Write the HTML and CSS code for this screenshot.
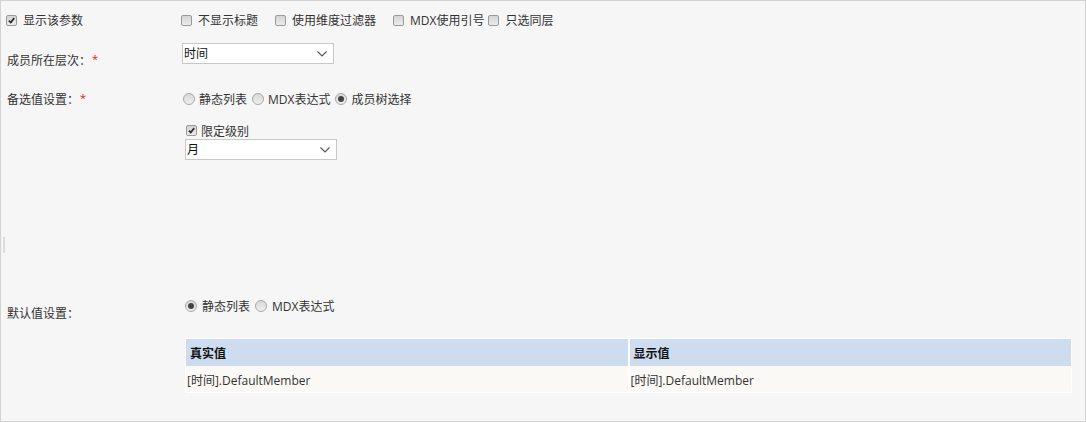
FILE: index.html
```html
<!DOCTYPE html>
<html lang="zh">
<head>
<meta charset="utf-8">
<title>参数设置</title>
<link rel="stylesheet" href="styles.css">
</head>
<body>
<div class="panel">
  <div class="row r1">
    <div class="label">
      <span class="cb checked"><svg viewBox="0 0 11 11"><path d="M2.3 5.6 L4.6 8 L8.8 2.6"/></svg></span>
      <span class="txt">显示该参数</span>
    </div>
    <div class="value opts">
      <span class="opt"><span class="cb"></span><span class="txt">不显示标题</span></span>
      <span class="opt"><span class="cb"></span><span class="txt">使用维度过滤器</span></span>
      <span class="opt tight"><span class="cb"></span><span class="txt">MDX使用引号</span></span>
      <span class="opt"><span class="cb"></span><span class="txt">只选同层</span></span>
    </div>
  </div>

  <div class="row r2">
    <div class="label">成员所在层次：<span class="req">*</span></div>
    <div class="value">
      <div class="select"><span>时间</span><svg class="chev" viewBox="0 0 10 6"><path d="M0.5 0.5 L5 5 L9.5 0.5"/></svg></div>
    </div>
  </div>

  <div class="row r3">
    <div class="label">备选值设置：<span class="req">*</span></div>
    <div class="value">
      <div class="radios first">
        <span class="ropt"><span class="rb"></span><span class="txt">静态列表</span></span>
        <span class="ropt"><span class="rb"></span><span class="txt">MDX表达式</span></span>
        <span class="ropt"><span class="rb on"></span><span class="txt">成员树选择</span></span>
      </div>
      <div class="sub">
        <div class="subcb">
          <span class="cb checked"><svg viewBox="0 0 11 11"><path d="M2.3 5.6 L4.6 8 L8.8 2.6"/></svg></span>
          <span class="txt">限定级别</span>
        </div>
        <div class="select"><span>月</span><svg class="chev" viewBox="0 0 10 6"><path d="M0.5 0.5 L5 5 L9.5 0.5"/></svg></div>
      </div>
    </div>
  </div>

  <div class="handle"></div>

  <div class="row r4">
    <div class="label">默认值设置：</div>
    <div class="value">
      <div class="radios indent">
        <span class="ropt"><span class="rb on"></span><span class="txt">静态列表</span></span>
        <span class="ropt"><span class="rb"></span><span class="txt">MDX表达式</span></span>
      </div>
    </div>
  </div>

  <table class="grid">
    <thead>
      <tr><th>真实值</th><th>显示值</th></tr>
    </thead>
    <tbody>
      <tr><td>[时间].DefaultMember</td><td>[时间].DefaultMember</td></tr>
    </tbody>
  </table>
</div>
</body>
</html>
```

FILE: styles.css
```css
* { box-sizing: border-box; }

body {
  margin: 0;
  font-family: "Open Sans", "Noto Sans CJK SC", sans-serif;
  font-size: 12px;
  color: #333;
}

.panel {
  width: 1086px;
  height: 422px;
  border: 1px solid #d3d3d3;
  background: #f6f6f6;
  padding: 8px 0 0 6px;
}

.row {
  display: flex;
  align-items: flex-start;
}

.label {
  width: 175px;
  flex: none;
  line-height: 17px;
  white-space: nowrap;
}

.value { flex: 1; }

.req {
  color: #e02020;
  font-size: 11px;
  margin-left: 1px;
  position: relative;
  top: -2px;
}

/* checkbox */
.cb {
  display: inline-block;
  width: 11px;
  height: 11px;
  flex: none;
  border: 1px solid #9a9a9a;
  border-radius: 2px;
  background: linear-gradient(#d4d4d4, #ececec);
}
.cb svg {
  display: block;
  width: 9px;
  height: 9px;
}
.cb svg path {
  fill: none;
  stroke: #2a2a2a;
  stroke-width: 2;
}

/* radio */
.rb {
  display: inline-block;
  width: 12px;
  height: 12px;
  flex: none;
  border: 1px solid #a8a8a8;
  border-radius: 50%;
  background: linear-gradient(#d8d8d8, #efefef);
  position: relative;
}
.rb.on::after {
  content: "";
  position: absolute;
  left: 2px;
  top: 2px;
  width: 6px;
  height: 6px;
  border-radius: 50%;
  background: #444;
}

/* row 1 */
.r1 { height: 22px; align-items: center; }
.r1 .label {
  display: flex;
  align-items: center;
  margin-left: -1px;
}
.r1 .label .cb { margin-right: 6px; }
.opts {
  display: flex;
  align-items: center;
}
.opt {
  display: flex;
  align-items: center;
  margin-right: 17px;
}
.opt .cb { margin-right: 6px; }
.opt.tight { margin-right: 4px; }

/* row 2 */
.r2 { margin-top: 12px; }
.r2 .label { padding-top: 10px; line-height: 16px; }

.select {
  width: 152px;
  height: 21px;
  border: 1px solid #c8c8c8;
  background: #fff;
  display: flex;
  align-items: center;
  justify-content: space-between;
  padding: 0 6px 0 1px;
  color: #111;
  line-height: 19px;
}
.chev {
  width: 10px;
  height: 6px;
  margin-top: 1px;
}
.chev path {
  fill: none;
  stroke: #555;
  stroke-width: 1.1;
}

/* row 3 */
.r3 { margin-top: 21px; }
.r3 .label { padding-top: 1px; }

.radios {
  display: flex;
  align-items: center;
  height: 17px;
}
.radios.first { margin-left: 1px; }
.radios.indent { margin-left: 3px; }
.ropt {
  display: flex;
  align-items: center;
  margin-right: 5px;
}
.ropt .rb { margin-right: 4px; }
.radios.indent .ropt .rb { margin-right: 5px; }

.sub {
  margin-left: 3px;
  margin-top: 15px;
}
.subcb {
  display: flex;
  align-items: center;
  height: 17px;
}
.subcb .cb { margin-left: 1px; margin-right: 4px; }

/* handle */
.handle {
  width: 2px;
  height: 16px;
  margin: 77px 0 0 -4px;
  background: #dcdcdc;
}

/* row 4 */
.r4 { margin-top: 44px; }
.r4 .label { padding-top: 8px; }

/* table */
.grid {
  margin: 16px 0 0 178px;
  width: 887px;
  border-collapse: collapse;
  border: 1px solid #fff;
  table-layout: fixed;
}
.grid th, .grid td {
  height: 27px;
  text-align: left;
  white-space: nowrap;
}
.grid th {
  background: #cedcef;
  color: #111;
  font-weight: bold;
  padding: 1px 4px 0;
}
.grid td {
  background: #faf9f6;
  color: #333;
  padding: 2px 1px 0;
}
.grid th + th, .grid td + td {
  border-left: 2px solid #fff;
}
```
